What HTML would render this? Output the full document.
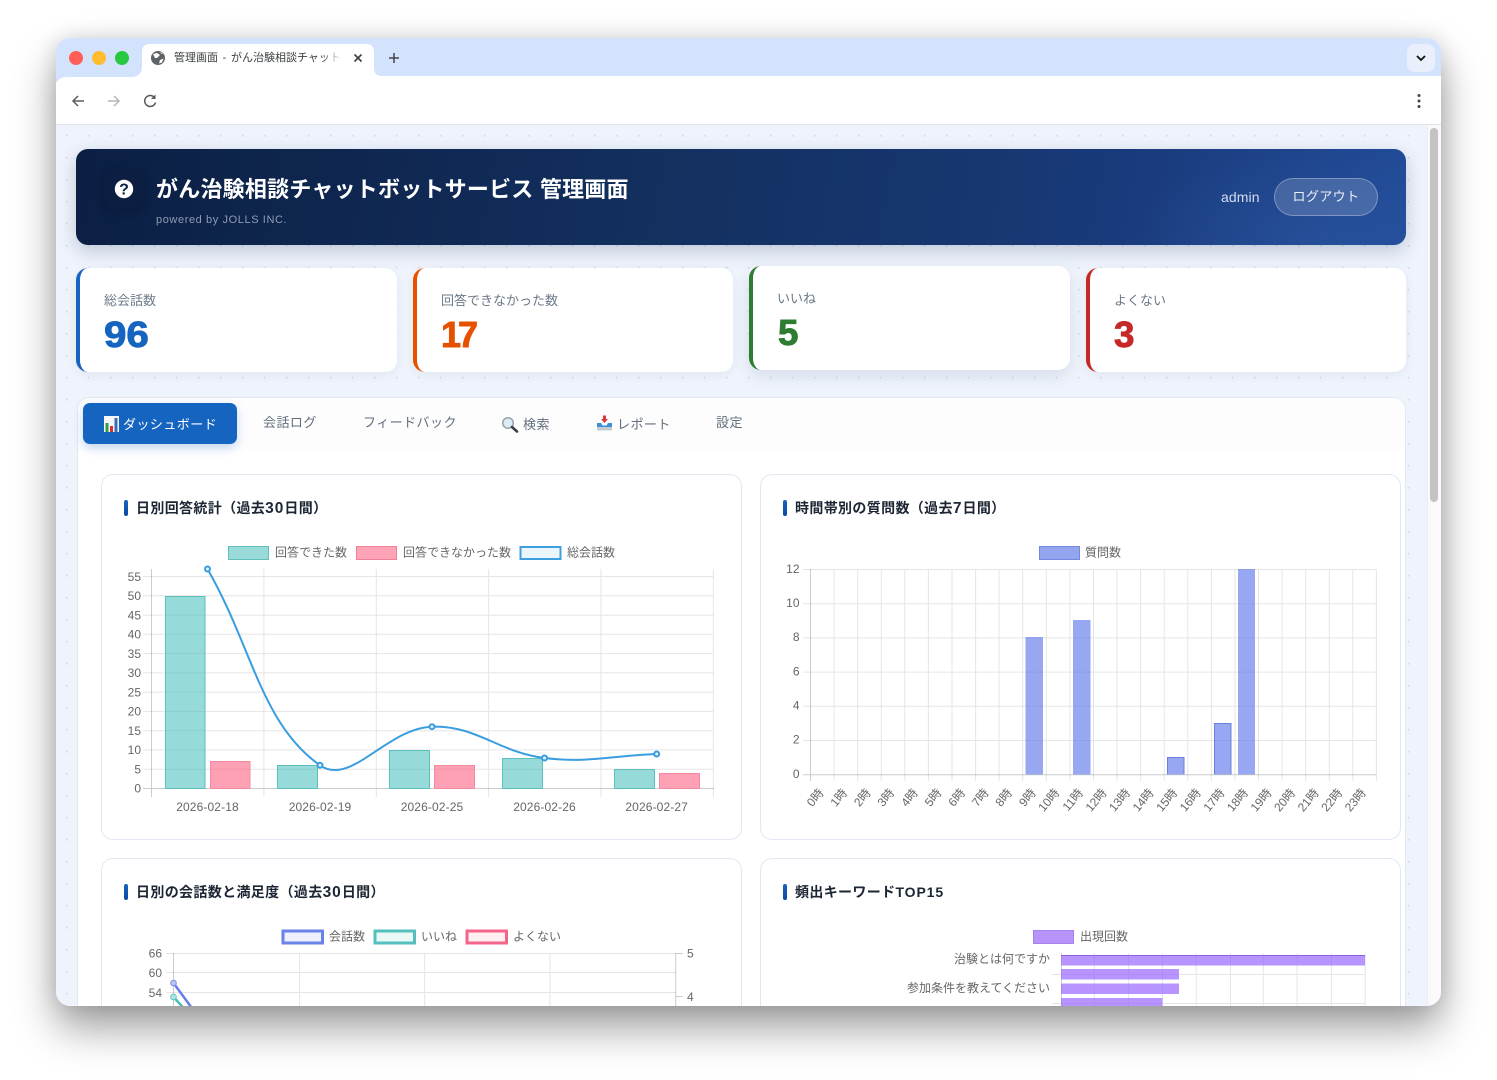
<!DOCTYPE html>
<html lang="ja"><head><meta charset="utf-8"><title>管理画面</title>
<style>
html,body{margin:0;padding:0;background:#fff;width:1497px;height:1080px;overflow:hidden}
body{font-family:"Liberation Sans","Noto Sans CJK JP",sans-serif;position:relative;text-spacing-trim:space-all}
#win{position:absolute;left:56px;top:38px;width:1385px;height:968px;border-radius:14px;box-shadow:0 22px 42px rgba(0,0,0,.38),0 0 22px rgba(0,0,0,.12)}
#clip{position:absolute;inset:0;border-radius:14px;overflow:hidden;background:#d3e3fd}
#in{position:absolute;left:-56px;top:-38px;width:1497px;height:1044px;overflow:hidden}
.a{position:absolute;white-space:nowrap}
#content{position:absolute;left:56px;top:125px;width:1371px;height:881px;background-color:#eff3fb;background-image:radial-gradient(circle at 10.7px 10.7px,#d8dde8 0.9px,transparent 1.2px);background-size:22px 22px}
#sb{position:absolute;left:1427px;top:125px;width:14px;height:881px;background:#fafafb;border-left:1px solid #ebedf1;box-sizing:border-box}
#thumb{position:absolute;left:1430px;top:128px;width:8px;height:374px;border-radius:4px;background:#c3c3c3}
#hd{position:absolute;left:76px;top:149px;width:1330px;height:96px;border-radius:12px;background:radial-gradient(ellipse 190px 90px at 1240px 90px,rgba(50,95,170,.35),transparent),linear-gradient(100deg,#0b1f43 0%,#13305f 45%,#193a7a 78%,#224c99 100%);box-shadow:0 6px 18px rgba(20,50,100,.22)}
.st{position:absolute;width:321px;height:104px;box-sizing:border-box;background:#fff;border-left:4px solid;border-radius:12px;box-shadow:0 3px 10px rgba(40,70,120,.07)}
.sl{position:absolute;left:24px;top:24px;font-size:13px;line-height:17px;color:#6b7888;white-space:nowrap}
.sv{position:absolute;left:24px;top:44.500px;font-size:36px;line-height:44px;font-weight:700;-webkit-text-stroke:.9px currentColor;transform:scaleX(1.12);transform-origin:0 0}
#panel{position:absolute;left:77px;top:397px;width:1329px;height:620px;box-sizing:border-box;background:#fff;border:1px solid #e3e8f1;border-radius:12px}
#tabs{position:absolute;left:78px;top:398px;width:1327px;height:52px;background:#fdfdfe;border-radius:12px 12px 0 0}
.tb{font-size:13px;letter-spacing:.45px;color:#626e7e;line-height:18px}
.cd{position:absolute;width:641px;height:366px;box-sizing:border-box;background:#fff;border:1px solid #e2e8f2;border-radius:12px}
.bar{position:absolute;width:3.5px;height:16px;border-radius:2px;background:linear-gradient(#1565c0,#0d47a1)}
.tt{font-size:14px;font-weight:700;color:#1c2533;line-height:20px;letter-spacing:.35px}
.tt span{font-size:15.500px;letter-spacing:1px}
svg text{font-family:"Liberation Sans","Noto Sans CJK JP",sans-serif;font-size:12px;fill:#666}
</style></head><body>
<div id="win"><div id="clip"><div id="in">

<!-- tab strip -->
<svg class="a" style="left:56px;top:38px" width="1385" height="44" viewBox="56 38 1385 44">
<path d="M130 77 C138 77 142 74 142 66 V52 Q142 44 150 44 H366 Q374 44 374 52 V68 Q374 76 382 76 H1441 V82 H56 V88 Q56 77 67 77 Z" fill="#fff"/>
<circle cx="76" cy="58" r="7" fill="#ff5f57"/><circle cx="99" cy="58" r="7" fill="#febc2e"/><circle cx="122" cy="58" r="7" fill="#28c840"/>
<circle cx="158" cy="58" r="7" fill="#5f6368"/>
<path d="M153 54 L157 53 L160 55 L157 58 L155 58 Z M160 60 L163.500 58.500 L162 62.500 L159 63.500 Z M160 52 L163 53.500 L161.500 54 Z" fill="#fff"/>
<path d="M354.500 54.500 L361.500 61.500 M361.500 54.500 L354.500 61.500" stroke="#3c4043" stroke-width="1.600" fill="none"/>
<path d="M394 53 V63 M389 58 H399" stroke="#444" stroke-width="1.500" fill="none"/>
<rect x="1407" y="44" width="28" height="28" rx="8" fill="#e9f0fb"/>
<path d="M1417 56 L1421 60 L1425 56" stroke="#111" stroke-width="1.800" fill="none"/>
</svg>
<div class="a" style="left:174px;top:50px;width:168px;overflow:hidden;font-size:11px;line-height:16px;color:#3c4043;word-spacing:1.6px;-webkit-mask-image:linear-gradient(90deg,#000 88%,transparent 100%);mask-image:linear-gradient(90deg,#000 88%,transparent 100%)">管理画面 - がん治験相談チャットボットサービス</div>

<!-- toolbar -->
<div class="a" style="left:56px;top:82px;width:1385px;height:42px;background:#fff"></div>
<div class="a" style="left:56px;top:124px;width:1385px;height:1px;background:#dfe3e9"></div>
<svg class="a" style="left:60px;top:86px" width="110" height="30" viewBox="60 86 110 30">
<path d="M84 101 H73 M78 96 L73 101 L78 106" stroke="#5b5e63" stroke-width="1.500" fill="none"/>
<path d="M108 101 H119 M114 96 L119 101 L114 106" stroke="#b4b6b9" stroke-width="1.500" fill="none"/>
<path d="M154.500 97.500 A5.500 5.500 0 1 0 155.500 102.500" stroke="#55585c" stroke-width="1.500" fill="none"/>
<path d="M155.500 94.500 V99 H151 Z" fill="#55585c"/>
</svg>
<svg class="a" style="left:1414px;top:92px" width="10" height="18"><circle cx="5" cy="3.500" r="1.500" fill="#444"/><circle cx="5" cy="9" r="1.500" fill="#444"/><circle cx="5" cy="14.500" r="1.500" fill="#444"/></svg>

<div id="content"></div>
<div id="sb"></div><div id="thumb"></div>

<!-- header -->
<div id="hd"></div>
<div class="a" style="left:104px;top:169px;width:40px;height:40px;border-radius:10px;background:#0c1f42;box-shadow:0 3px 8px rgba(5,15,40,.3)"></div>
<svg class="a" style="left:114px;top:179px" width="20" height="20"><circle cx="10" cy="10" r="9.200" fill="#fff"/><text x="10" y="15.500" text-anchor="middle" style="font-size:16px;font-weight:700;fill:#0c1f42">?</text></svg>
<div class="a" style="left:156px;top:175px;font-size:22px;font-weight:700;line-height:30px;color:#fff;letter-spacing:.22px">がん治験相談チャットボットサービス 管理画面</div>
<div class="a" style="left:156px;top:212px;font-size:11px;line-height:16px;color:#8f9cb6;letter-spacing:.6px">powered by JOLLS INC.</div>
<div class="a" style="left:1221px;top:188px;font-size:14px;line-height:18px;color:#d4ddee;letter-spacing:.1px">admin</div>
<div class="a" style="left:1274px;top:178px;width:104px;height:38px;box-sizing:border-box;border-radius:19px;background:rgba(255,255,255,.16);border:1px solid rgba(255,255,255,.3);color:#eef2f9;font-size:13px;line-height:36px;text-align:center;letter-spacing:.4px">ログアウト</div>

<!-- stats -->
<div class="st" style="left:76px;top:268px;border-color:#1565c0"><div class="sl">総会話数</div><div class="sv" style="color:#1565c0">96</div></div>
<div class="st" style="left:413px;top:268px;width:320px;border-color:#e65100"><div class="sl">回答できなかった数</div><div class="sv" style="color:#e65100;letter-spacing:-3px;margin-left:0;transform:scaleX(1)">17</div></div>
<div class="st" style="left:749px;top:266px;border-color:#2e7d32;box-shadow:0 6px 16px rgba(40,70,120,.12)"><div class="sl">いいね</div><div class="sv" style="color:#2e7d32;transform:scaleX(1.02);margin-left:1px">5</div></div>
<div class="st" style="left:1086px;top:268px;width:320px;border-color:#c62828"><div class="sl">よくない</div><div class="sv" style="color:#c62828;transform:scaleX(1.02)">3</div></div>

<!-- panel & tabs -->
<div id="panel"></div><div id="tabs"></div>
<div class="a" style="left:83px;top:403px;width:154px;height:41px;border-radius:7px;background:#1565c0;box-shadow:0 4px 10px rgba(21,101,192,.25)"></div>
<svg class="a" style="left:103px;top:415px" width="17" height="18">
<rect x="1" y="1" width="15" height="16" fill="#f4f6f8"/>
<rect x="2.500" y="8" width="3" height="9" fill="#2e9e48"/><rect x="7" y="11" width="3" height="6" fill="#d93030"/><rect x="11.500" y="3" width="3" height="14" fill="#3a6fb5"/>
</svg>
<div class="a tb" style="left:123px;top:416px;color:#fff">ダッシュボード</div>
<div class="a tb" style="left:263px;top:414px">会話ログ</div>
<div class="a tb" style="left:363px;top:414px">フィードバック</div>
<svg class="a" style="left:501px;top:416px" width="18" height="17">
<circle cx="7" cy="7" r="5.300" fill="#dcecf6" stroke="#9aa2a8" stroke-width="1.500"/>
<path d="M11 11 L16 15.500" stroke="#3d4145" stroke-width="2.600" stroke-linecap="round"/>
</svg>
<div class="a tb" style="left:523px;top:416px">検索</div>
<svg class="a" style="left:596px;top:414px" width="17" height="18">
<path d="M1 9 H5 L6.500 11.500 H10.500 L12 9 H16 V13 H1 Z" fill="#3d8fd6"/>
<rect x="1" y="13" width="15" height="3.500" fill="#c5ccd4"/>
<path d="M7 1.500 H10 V5 H12 L8.500 9 L5 5 H7 Z" fill="#d9363e"/>
</svg>
<div class="a tb" style="left:617px;top:416px">レポート</div>
<div class="a tb" style="left:716px;top:414px">設定</div>

<!-- cards -->
<div class="cd" style="left:101px;top:474px"></div>
<div class="cd" style="left:760px;top:474px"></div>
<div class="cd" style="left:101px;top:858px;height:170px"></div>
<div class="cd" style="left:760px;top:858px;height:170px"></div>
<div class="a bar" style="left:124px;top:500px"></div><div class="a tt" style="left:136px;top:498px">日別回答統計（過去<span>30</span>日間）</div>
<div class="a bar" style="left:783px;top:500px"></div><div class="a tt" style="left:795px;top:498px">時間帯別の質問数（過去<span>7</span>日間）</div>
<div class="a bar" style="left:124px;top:884px"></div><div class="a tt" style="left:136px;top:882px">日別の会話数と満足度（過去<span>30</span>日間）</div>
<div class="a bar" style="left:783px;top:884px"></div><div class="a tt" style="left:795px;top:882px">頻出キーワード<span style="font-size:14px;letter-spacing:.9px">TOP15</span></div>

<!-- charts -->
<svg class="a" style="left:0;top:0" width="1497" height="1006" viewBox="0 0 1497 1006">
<!-- chart 1 -->
<rect x="228.500" y="546.500" width="40" height="13" fill="#9adad8" stroke="#5fc2bf"/>
<text x="275" y="556.500">回答できた数</text>
<rect x="356.500" y="546.500" width="40" height="13" fill="#ffa3b6" stroke="#f07f98"/>
<text x="403" y="556.500">回答できなかった数</text>
<rect x="520.500" y="547" width="40" height="12" fill="#ebf5fc" stroke="#3f9fe0" stroke-width="2"/>
<text x="567" y="556.500">総会話数</text>
<path d="M143 576.500H714M143 595.800H714M143 615.100H714M143 634.300H714M143 653.600H714M143 672.900H714M143 692.100H714M143 711.400H714M143 730.700H714M143 749.900H714M143 769.200H714M263.900 569V797M376.300 569V797M488.600 569V797M601 569V797M713.400 569V797" stroke="#000" stroke-opacity=".1" fill="none"/>
<path d="M151.500 569V797M143 788.500H714" stroke="#000" stroke-opacity=".2" fill="none"/>
<g text-anchor="end">
<text x="141" y="581">55</text><text x="141" y="600">50</text><text x="141" y="619.500">45</text><text x="141" y="638.500">40</text><text x="141" y="658">35</text><text x="141" y="677">30</text><text x="141" y="696.500">25</text><text x="141" y="715.500">20</text><text x="141" y="735">15</text><text x="141" y="754">10</text><text x="141" y="773.500">5</text><text x="141" y="792.500">0</text>
</g>
<g text-anchor="middle" style="letter-spacing:.12px">
<text x="207.500" y="811">2026-02-18</text><text x="320" y="811">2026-02-19</text><text x="432" y="811">2026-02-25</text><text x="544.500" y="811">2026-02-26</text><text x="656.700" y="811">2026-02-27</text>
</g>
<g fill="#4bc0c0" fill-opacity=".58" stroke="#5fbfbd" stroke-width="1">
<rect x="165.500" y="596.500" width="39.500" height="192"/><rect x="277.500" y="765.500" width="40" height="23"/><rect x="389.500" y="750.500" width="40" height="38"/><rect x="502.500" y="758.500" width="40" height="30"/><rect x="614.500" y="769.500" width="40" height="19"/>
</g>
<g fill="#ff6384" fill-opacity=".6" stroke="#f48aa0" stroke-width="1">
<rect x="210.500" y="761.500" width="39.500" height="27"/><rect x="434.500" y="765.500" width="40" height="23"/><rect x="659.500" y="773.500" width="40" height="15"/>
</g>
<path d="M207.500 569 C252.500 647.500 261.100 723.900 320 765.300 C350.900 787 386.800 728.200 432 726.700 C476.600 725.250 498.700 752.400 544.500 758 C588.500 763.350 611.800 755.600 656.700 754" fill="none" stroke="#3a9de0" stroke-width="2"/>
<g fill="#e6f3fc" stroke="#3a9de0" stroke-width="2">
<circle cx="207.500" cy="569" r="2.500"/><circle cx="320" cy="765.300" r="2.500"/><circle cx="432" cy="726.700" r="2.500"/><circle cx="544.500" cy="758" r="2.500"/><circle cx="656.700" cy="754" r="2.500"/>
</g>

<!-- chart 2 -->
<rect x="1039.500" y="546.500" width="40" height="13" fill="#94a5f0" stroke="#7488df"/>
<text x="1085" y="556.500">質問数</text>
<path d="M803 569.500H1376M803 603.700H1376M803 637.900H1376M803 672.100H1376M803 706.300H1376M803 740.500H1376M834.100 569V781M857.700 569V781M881.200 569V781M904.800 569V781M928.400 569V781M952 569V781M975.600 569V781M999.100 569V781M1022.700 569V781M1046.300 569V781M1069.900 569V781M1093.500 569V781M1117 569V781M1140.600 569V781M1164.200 569V781M1187.800 569V781M1211.400 569V781M1234.900 569V781M1258.500 569V781M1282.100 569V781M1305.700 569V781M1329.300 569V781M1352.800 569V781M1376.400 569V781" stroke="#000" stroke-opacity=".1" fill="none"/>
<path d="M810.500 569V781M803 774.700H1376" stroke="#000" stroke-opacity=".2" fill="none"/>
<g text-anchor="end">
<text x="799.500" y="573">12</text><text x="799.500" y="607">10</text><text x="799.500" y="641">8</text><text x="799.500" y="675.500">6</text><text x="799.500" y="709.500">4</text><text x="799.500" y="743.500">2</text><text x="799.500" y="778">0</text>
</g>
<g fill="#667eea" fill-opacity=".68">
<rect x="1025.500" y="637" width="17.500" height="137.500"/><rect x="1073" y="620" width="17.500" height="154.500"/><rect x="1167.500" y="757.300" width="17" height="17.200"/><rect x="1214.500" y="723" width="17" height="51.500"/><rect x="1238" y="569" width="17" height="205.500"/>
</g>
<path d="M1167.500 774.500V757.500H1184V774.500M1214.500 774.500V723.500H1231V774.500" fill="none" stroke="#6a7fd8"/>
<g text-anchor="end" transform="translate(2,-3)">
<text transform="translate(822.300,796) rotate(-50)">0時</text>
<text transform="translate(845.900,796) rotate(-50)">1時</text>
<text transform="translate(869.500,796) rotate(-50)">2時</text>
<text transform="translate(893,796) rotate(-50)">3時</text>
<text transform="translate(916.600,796) rotate(-50)">4時</text>
<text transform="translate(940.200,796) rotate(-50)">5時</text>
<text transform="translate(963.800,796) rotate(-50)">6時</text>
<text transform="translate(987.400,796) rotate(-50)">7時</text>
<text transform="translate(1010.900,796) rotate(-50)">8時</text>
<text transform="translate(1034.500,796) rotate(-50)">9時</text>
<text transform="translate(1058.100,796) rotate(-50)">10時</text>
<text transform="translate(1081.700,796) rotate(-50)">11時</text>
<text transform="translate(1105.300,796) rotate(-50)">12時</text>
<text transform="translate(1128.800,796) rotate(-50)">13時</text>
<text transform="translate(1152.400,796) rotate(-50)">14時</text>
<text transform="translate(1176,796) rotate(-50)">15時</text>
<text transform="translate(1199.600,796) rotate(-50)">16時</text>
<text transform="translate(1223.200,796) rotate(-50)">17時</text>
<text transform="translate(1246.700,796) rotate(-50)">18時</text>
<text transform="translate(1270.300,796) rotate(-50)">19時</text>
<text transform="translate(1293.900,796) rotate(-50)">20時</text>
<text transform="translate(1317.500,796) rotate(-50)">21時</text>
<text transform="translate(1341.100,796) rotate(-50)">22時</text>
<text transform="translate(1364.600,796) rotate(-50)">23時</text>
</g>

<!-- chart 3 -->
<rect x="283" y="931" width="39.500" height="12" fill="#eef1fd" stroke="#6b82e6" stroke-width="3"/>
<text x="329" y="940.500">会話数</text>
<rect x="375" y="931" width="39.500" height="12" fill="#ebf8f8" stroke="#54bfbd" stroke-width="3"/>
<text x="421" y="940.500">いいね</text>
<rect x="467" y="931" width="39.500" height="12" fill="#ffeff3" stroke="#f4648a" stroke-width="3"/>
<text x="513" y="940.500">よくない</text>
<path d="M166 953.500H676M166 972.500H676M166 992.500H676M299.600 953V1006M424.600 953V1006M550 953V1006" stroke="#000" stroke-opacity=".1" fill="none"/>
<path d="M173.500 953V1006M675.700 953V1006M676 953.500H683M676 996.500H683" stroke="#000" stroke-opacity=".2" fill="none"/>
<g text-anchor="end"><text x="162" y="957.500">66</text><text x="162" y="977">60</text><text x="162" y="997">54</text></g>
<text x="687" y="957.500">5</text><text x="687" y="1001">4</text>
<path d="M173.500 983 L194 1011" stroke="#667eea" stroke-width="2.500" fill="none"/>
<path d="M173.500 997 L190 1015" stroke="#4bbdb5" stroke-width="2.500" fill="none"/>
<circle cx="173.500" cy="983" r="2.800" fill="#b9c5f4" stroke="#7d90e8"/>
<circle cx="173.500" cy="997" r="2.800" fill="#b5e6e2" stroke="#5cc4bd"/>

<!-- chart 4 -->
<rect x="1033.500" y="930.500" width="40" height="13" fill="#b894fa" stroke="#a582ec"/>
<text x="1080" y="940.500">出現回数</text>
<path d="M1052 974.500H1365M1052 1003.500H1365M1094.300 953V1006M1128.600 953V1006M1162.400 953V1006M1196.200 953V1006M1230.500 953V1006M1263.300 953V1006M1297.100 953V1006M1331.400 953V1006M1365.200 953V1006" stroke="#000" stroke-opacity=".1" fill="none"/>
<path d="M1061.500 953V1006" stroke="#000" stroke-opacity=".18" fill="none"/>
<g text-anchor="end"><text x="1050" y="963">治験とは何ですか</text><text x="1050" y="992">参加条件を教えてください</text></g>
<g fill="#9966ff" fill-opacity=".7">
<rect x="1061" y="955" width="304" height="10.500"/><rect x="1061" y="969" width="118" height="10.500"/><rect x="1061" y="983.500" width="118" height="10.500"/><rect x="1061" y="998" width="101.500" height="10.500"/>
</g>
<path d="M1061 955.500H1365" stroke="#8a5fe0"/>
</svg>

</div></div></div>
</body></html>
